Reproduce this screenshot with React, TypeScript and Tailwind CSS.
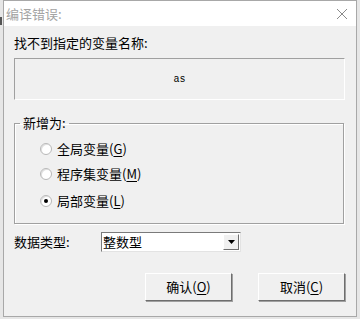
const font = "font-['SimSun','Noto_Sans_CJK_SC',sans-serif]"

const Radio = ({ checked, label, hot }: { checked?: boolean; label: string; hot: string }) => (
    <div className="flex items-center h-[16px]">
        <span className="w-[12px] h-[12px] rounded-full bg-white border border-[#b8b8b8] shadow-[inset_1px_1px_0_#e0e0e0] flex items-center justify-center">
            {checked && <span className="w-[4px] h-[4px] rounded-full bg-black" />}
        </span>
        <span className="ml-[5px] text-[13px] leading-[16px] text-black">
            {label}(<span className="underline underline-offset-2">{hot}</span>)
        </span>
    </div>
)

const Btn = ({ label, hot }: { label: string; hot: string }) => (
    <button className="w-[87px] h-[28px] bg-[#f0f0f0] border border-t-white border-l-white border-r-[#6e6e6e] border-b-[#6e6e6e] shadow-[1px_1px_0_#a0a0a0] text-[13px] text-black flex items-center justify-center">
        {label}(<span className="underline underline-offset-2">{hot}</span>)
    </button>
)

export default function App() {
    return (
        <div className={`w-[360px] h-[319px] bg-[#e6e6e6] flex ${font}`}>
            <div className="w-[3px] flex flex-col">
                <div className="h-[17px]" />
                <div className="h-[8px] w-[2px] bg-[#555]" />
            </div>
            <div className="w-[354px] h-[317px] border border-[#a8a8a8] bg-[#f0f0f0] flex flex-col">
                <div className="h-[25px] bg-white flex items-center justify-between pl-[2px] pr-[8px]">
                    <span className="text-[13px] text-[#a3a3a3]">编译错误:</span>
                    <svg width="12" height="12" viewBox="0 0 12 12">
                        <path d="M1 1L11 11M11 1L1 11" stroke="#8a8a8a" strokeWidth="1" />
                    </svg>
                </div>
                <div className="flex flex-col pl-[10px] pr-[11px]">
                    <div className="mt-[9px] h-[16px] text-[13px] leading-[16px] text-black">找不到指定的变量名称:</div>
                    <div className="mt-[7px] h-[42px] border border-t-[#a0a0a0] border-l-[#a0a0a0] border-r-white border-b-white flex items-center justify-center">
                        <span className="font-['Liberation_Mono',monospace] text-[10px] text-black">as</span>
                    </div>
                    <fieldset className="mt-[15px] border border-[#a0a0a0] shadow-[1px_1px_0_#fff,inset_1px_1px_0_#fff] pb-[14px] mr-[1px]">
                        <legend className="ml-[5px] px-[3px] text-[13px] leading-[16px] text-black">新增为:</legend>
                        <div className="mt-[10px] pl-[25px] flex flex-col">
                            <Radio label="全局变量" hot="G" />
                            <div className="mt-[9px]"><Radio label="程序集变量" hot="M" /></div>
                            <div className="mt-[11px]"><Radio checked label="局部变量" hot="L" /></div>
                        </div>
                    </fieldset>
                    <div className="mt-[8px] flex items-center h-[20px]">
                        <span className="w-[87px] text-[13px] text-black">数据类型:</span>
                        <div className="w-[140px] h-[20px] bg-white border border-t-[#7a7a7a] border-l-[#7a7a7a] border-r-[#e3e3e3] border-b-[#e3e3e3] flex items-center justify-between pl-[1px] pr-[1px]">
                            <span className="text-[13px] leading-[16px] text-black">整数型</span>
                            <span className="w-[16px] h-[16px] bg-[#f0f0f0] border border-t-white border-l-white border-r-[#6e6e6e] border-b-[#6e6e6e] flex items-center justify-center">
                                <svg width="7" height="4" viewBox="0 0 7 4"><path d="M0 0H7L3.5 4Z" fill="#000" /></svg>
                            </span>
                        </div>
                    </div>
                    <div className="mt-[21px] flex justify-end gap-[26px]">
                        <Btn label="确认" hot="O" />
                        <Btn label="取消" hot="C" />
                    </div>
                </div>
            </div>
        </div>
    )
}
